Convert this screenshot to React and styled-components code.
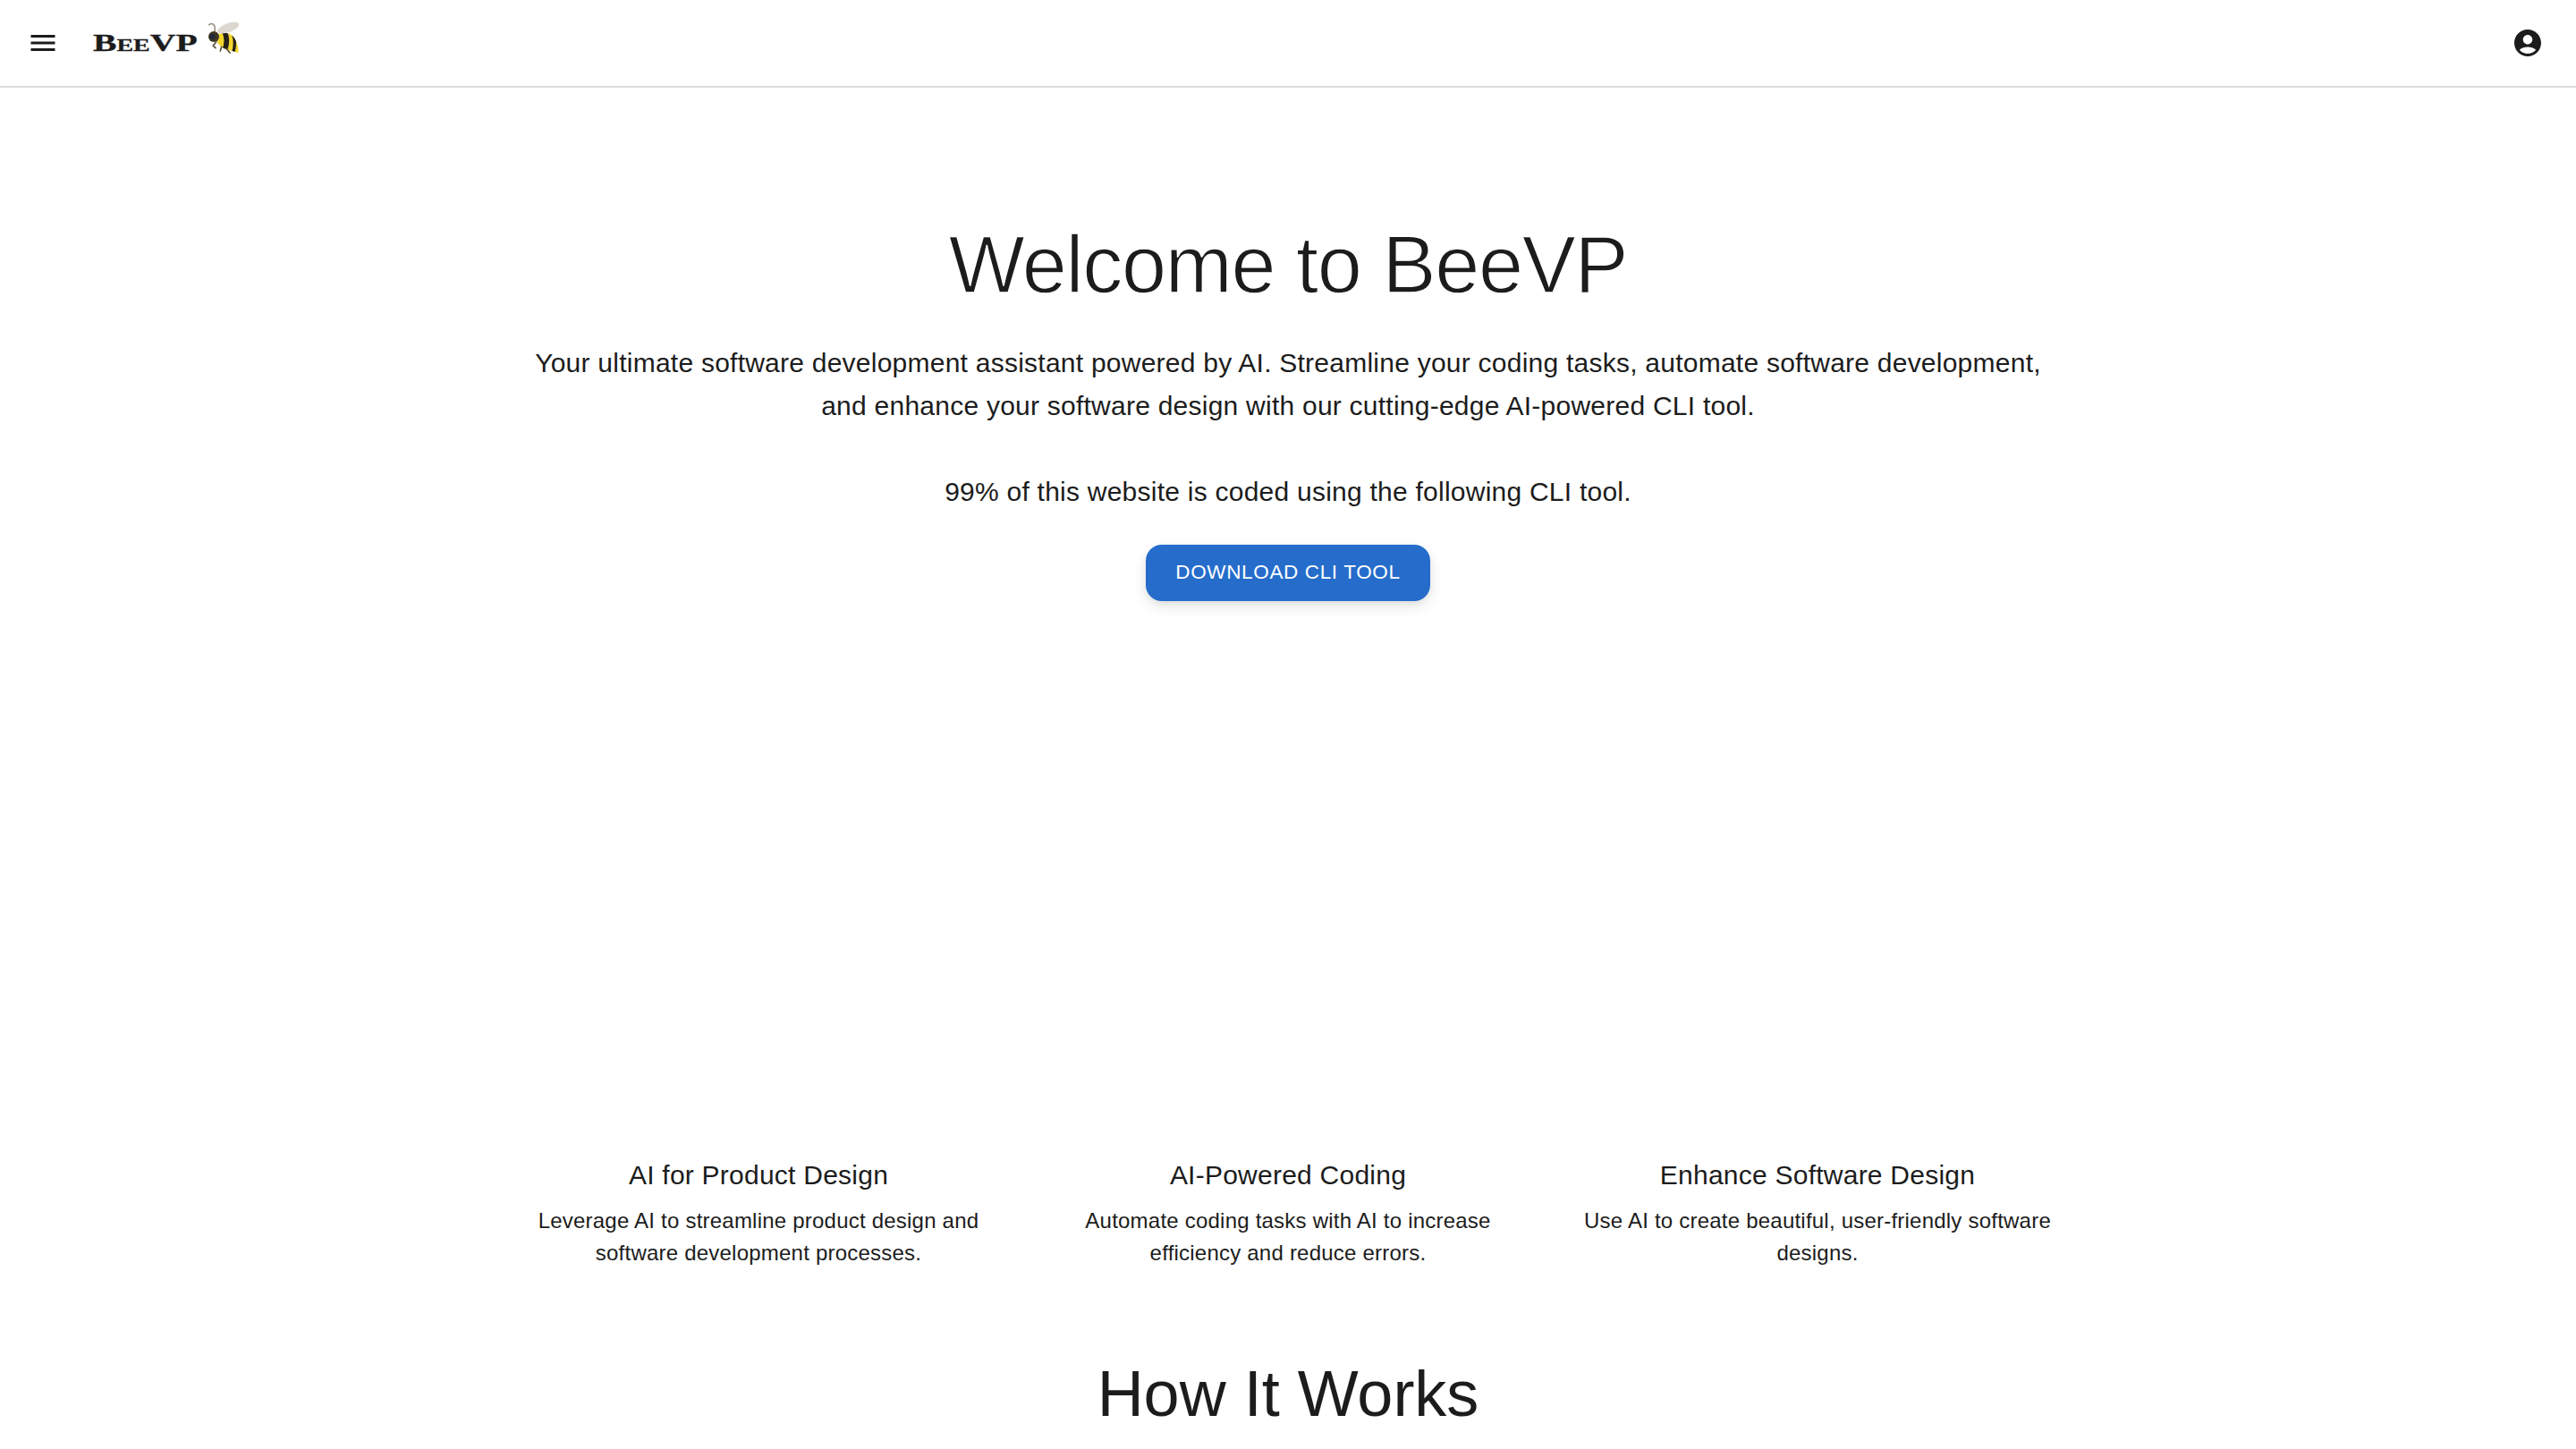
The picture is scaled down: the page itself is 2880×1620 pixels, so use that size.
import styled, { createGlobalStyle } from "styled-components";

const GlobalStyle = createGlobalStyle`
  html, body {
    margin: 0;
    height: 100%;
    overflow: hidden;
    background: #fff;
    color: #1c1c1c;
    font-family: "Liberation Sans", Arial, sans-serif;
  }
`;

const features = [
  {
    title: "AI for Product Design",
    text: "Leverage AI to streamline product design and software development processes.",
  },
  {
    title: "AI-Powered Coding",
    text: "Automate coding tasks with AI to increase efficiency and reduce errors.",
  },
  {
    title: "Enhance Software Design",
    text: "Use AI to create beautiful, user-friendly software designs.",
  },
];

const bodyPath = "M24 50 C42 30 74 34 88 56 C98 72 102 92 100 104 C84 100 72 96 60 92 C42 88 28 72 24 50 Z";

function Bee() {
  return (
    <BeeSvg viewBox="0 0 102 106">
      <defs>
        <clipPath id="bee-body">
          <path d={bodyPath} />
        </clipPath>
      </defs>
      <path d="M16 42 C24 30 24 16 17 9 C13 5 6 6 2 10" fill="none" stroke="#9a9280" strokeWidth="5" strokeLinecap="round" />
      <path d={bodyPath} fill="#f1d52c" />
      <g clipPath="url(#bee-body)" fill="none" stroke="#25211a">
        <path d="M52 28 C64 52 64 76 52 100" strokeWidth="17" />
        <path d="M82 38 C90 60 90 84 82 106" strokeWidth="10" />
      </g>
      <ellipse cx="67" cy="20" rx="38" ry="15" transform="rotate(-20 67 20)" fill="#dcd8cf" />
      <circle cx="18" cy="50" r="18" fill="#3f3723" />
      <circle cx="14" cy="50" r="9" fill="#1e2738" />
      <path d="M26 68 L16 80 L24 88 M44 84 L40 98 M62 92 L72 104" fill="none" stroke="#5a5038" strokeWidth="5" strokeLinecap="round" />
    </BeeSvg>
  );
}

function App() {
  return (
    <>
      <GlobalStyle />
      <Header>
        <Brand>
          <IconSvg viewBox="0 0 24 24">
            <path d="M3 18h18v-2H3zm0-5h18v-2H3zm0-7v2h18V6z" />
          </IconSvg>
          <Logo>BeeVP</Logo>
          <Bee />
        </Brand>
        <IconSvg viewBox="0 0 24 24">
          <path d="M12 2C6.48 2 2 6.48 2 12s4.48 10 10 10 10-4.48 10-10S17.52 2 12 2m0 4c1.93 0 3.5 1.57 3.5 3.5S13.93 13 12 13s-3.5-1.57-3.5-3.5S10.07 6 12 6m0 14c-2.03 0-4.43-.82-6.14-2.88C7.55 15.8 9.68 15 12 15s4.45.8 6.14 2.12C16.43 19.18 14.03 20 12 20" />
        </IconSvg>
      </Header>
      <Main>
        <Title>Welcome to BeeVP</Title>
        <Intro>
          Your ultimate software development assistant powered by AI. Streamline your coding
          tasks, automate software development, and enhance your software design with our
          cutting-edge AI-powered CLI tool.
        </Intro>
        <Note>99% of this website is coded using the following CLI tool.</Note>
        <DownloadButton>Download CLI Tool</DownloadButton>
        <Features>
          {features.map((f) => (
            <Feature key={f.title}>
              <FeatureTitle>{f.title}</FeatureTitle>
              <FeatureText>{f.text}</FeatureText>
            </Feature>
          ))}
        </Features>
        <SectionTitle>How It Works</SectionTitle>
      </Main>
    </>
  );
}

const Header = styled.header`
  height: 96px;
  padding: 0 36px 0 30px;
  display: flex;
  align-items: center;
  justify-content: space-between;
  border-bottom: 2px solid #dcdcdc;
  box-sizing: content-box;
`;

const Brand = styled.div`
  display: flex;
  align-items: center;
`;

const IconSvg = styled.svg`
  width: 36px;
  height: 36px;
  fill: #1c1c1c;
  display: block;
`;

const Logo = styled.span`
  display: inline-block;
  width: 78px;
  margin: 0 39px 0 38px;
  font-family: "Liberation Serif", serif;
  font-weight: 700;
  font-variant: small-caps;
  font-size: 27px;
  color: #1c1c1c;
  -webkit-text-stroke: 0.3px #1c1c1c;
  transform: scaleX(1.47);
  transform-origin: left center;
`;

const BeeSvg = styled.svg`
  width: 34px;
  height: 36px;
  margin: -12px 0 0 12px;
`;

const Main = styled.main`
  width: 1728px;
  margin: 0 auto;
  text-align: center;
`;

const Title = styled.h1`
  margin: 0;
  padding-top: 144px;
  font-size: 90px;
  line-height: 1.2;
  font-weight: 300;
  letter-spacing: -1.25px;
  -webkit-text-stroke: 1.4px #fff;
`;

const Intro = styled.p`
  margin: 32px 0 0;
  font-size: 30px;
  line-height: 48px;
  font-weight: 400;
  letter-spacing: 0.24px;
`;

const Note = styled.p`
  margin: 48px 0 0;
  font-size: 30px;
  line-height: 48px;
  letter-spacing: 0.24px;
`;

const DownloadButton = styled.button`
  display: block;
  margin: 35px auto 0;
  width: 318px;
  height: 63px;
  padding-bottom: 2px;
  border: 0;
  border-radius: 18px;
  background: #256ccb;
  color: #fff;
  font-family: inherit;
  font-size: 22.5px;
  letter-spacing: 0.64px;
  text-transform: uppercase;
  box-shadow: 0 6px 16px rgba(0, 0, 0, 0.1), 0 2px 6px rgba(0, 0, 0, 0.06);
`;

const Features = styled.section`
  margin-top: 618px;
  display: grid;
  grid-template-columns: repeat(3, 1fr);
  column-gap: 48px;
`;

const Feature = styled.article``;

const FeatureTitle = styled.h3`
  margin: 0;
  font-size: 30px;
  line-height: 1.6;
  font-weight: 400;
  letter-spacing: 0.24px;
`;

const FeatureText = styled.p`
  margin: 9px 0 0;
  font-size: 24px;
  line-height: 36px;
  letter-spacing: 0.22px;
`;

const SectionTitle = styled.h2`
  margin: 96px 0 0;
  font-size: 72px;
  line-height: 1.2;
  font-weight: 400;
`;

export default App;
